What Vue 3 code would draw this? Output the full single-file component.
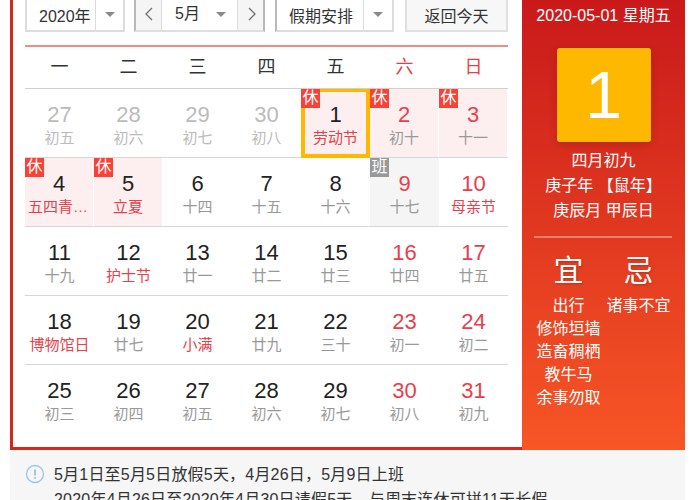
<script setup>
const weekdays = [
  { t: '一' }, { t: '二' }, { t: '三' }, { t: '四' }, { t: '五' },
  { t: '六', red: true }, { t: '日', red: true }
]
const d = (n, l, o = {}) => ({ n, l, ...o })
const days = [
  d(27, '初五', { dim: true }), d(28, '初六', { dim: true }), d(29, '初七', { dim: true }), d(30, '初八', { dim: true }),
  d(1, '劳动节', { rest: true, fest: true, sel: true }), d(2, '初十', { rest: true, wk: true }), d(3, '十一', { rest: true, wk: true }),
  d(4, '五四青年节', { rest: true, fest: true }), d(5, '立夏', { rest: true, fest: true }), d(6, '十四'), d(7, '十五'), d(8, '十六'),
  d(9, '十七', { work: true, wk: true }), d(10, '母亲节', { wk: true, fest: true }),
  d(11, '十九'), d(12, '护士节', { fest: true }), d(13, '廿一'), d(14, '廿二'), d(15, '廿三'), d(16, '廿四', { wk: true }), d(17, '廿五', { wk: true }),
  d(18, '博物馆日', { fest: true }), d(19, '廿七'), d(20, '小满', { fest: true }), d(21, '廿九'), d(22, '三十'), d(23, '初一', { wk: true }), d(24, '初二', { wk: true }),
  d(25, '初三', { last: true }), d(26, '初四', { last: true }), d(27, '初五', { last: true }), d(28, '初六', { last: true }), d(29, '初七', { last: true }), d(30, '初八', { wk: true, last: true }), d(31, '初九', { wk: true, last: true })
]
const yi = ['出行', '修饰垣墙', '造畜稠栖', '教牛马', '余事勿取']
</script>

<template>
  <div class="page">
    <div class="calendar">
      <div class="main">
        <div class="toolbar">
          <div class="box year">
            <span class="label">2020年</span>
            <span class="arrow-cell"><i class="caret"></i></span>
          </div>
          <div class="box month">
            <span class="nav">
              <svg width="10" height="14" viewBox="0 0 10 14"><path d="M8 1 2 7l6 6" fill="none" stroke="#707070" stroke-width="1.300" /></svg>
            </span>
            <span class="month-mid"><span class="label">5月</span><i class="caret"></i></span>
            <span class="nav nav-r">
              <svg width="10" height="14" viewBox="0 0 10 14"><path d="M2 1l6 6-6 6" fill="none" stroke="#707070" stroke-width="1.300" /></svg>
            </span>
          </div>
          <div class="box holiday">
            <span class="label">假期安排</span>
            <span class="arrow-cell"><i class="caret"></i></span>
          </div>
          <div class="today">返回今天</div>
        </div>
        <div class="weekhead">
          <div v-for="w in weekdays" :key="w.t" class="wh" :class="{ red: w.red }">{{ w.t }}</div>
        </div>
        <div class="grid">
          <div v-for="(c, i) in days" :key="i" class="cell"
            :class="{ rest: c.rest, work: c.work, dim: c.dim, wk: c.wk, fest: c.fest, sel: c.sel, last: c.last }">
            <span v-if="c.rest" class="tag">休</span>
            <span v-if="c.work" class="tag tag-work">班</span>
            <div class="num">{{ c.n }}</div>
            <div class="lunar">{{ c.l }}</div>
          </div>
        </div>
      </div>
      <aside class="side">
        <div class="side-date">2020-05-01 星期五</div>
        <div class="big">1</div>
        <div class="side-l">四月初九</div>
        <div class="side-l">庚子年 【鼠年】</div>
        <div class="side-l">庚辰月 甲辰日</div>
        <div class="rule"></div>
        <div class="almanac">
          <div class="col">
            <div class="head">宜</div>
            <div v-for="t in yi" :key="t" class="it">{{ t }}</div>
          </div>
          <div class="col">
            <div class="head">忌</div>
            <div class="it">诸事不宜</div>
          </div>
        </div>
      </aside>
    </div>
    <div class="note">
      <svg class="info" width="20" height="20" viewBox="0 0 20 20">
        <circle cx="10" cy="10" r="8.500" fill="none" stroke="#9cc2f5" stroke-width="1.300" />
        <path d="M10 5.500v6M10 13v1.800" stroke="#7fb0f0" stroke-width="1.400" fill="none" />
      </svg>
      <div class="note-text">
        <div>5月1日至5月5日放假5天，4月26日，5月9日上班</div>
        <div>2020年4月26日至2020年4月30日请假5天，与周末连休可拼11天长假</div>
      </div>
    </div>
  </div>
</template>

<style>
html, body { margin: 0; overflow: hidden; background: #fff; }
</style>

<style scoped>
.page {
  width: 700px;
  height: 500px;
  overflow: hidden;
  font-family: "Liberation Sans", "Noto Sans CJK SC", sans-serif;
  color: #333;
  background: #fff;
}
.calendar {
  margin: -2px 15px 0 10px;
  height: 452px;
  box-sizing: border-box;
  display: flex;
  border-left: 3px solid #d5251c;
  border-bottom: 3px solid #d5251c;
}
.main {
  width: 509px;
  padding: 0 14px 0 12px;
  box-sizing: border-box;
}
.toolbar {
  display: flex;
  height: 34px;
  font-size: 16px;
  line-height: 34px;
}
.box {
  display: flex;
  box-sizing: border-box;
  height: 34px;
  border: 2px solid #dcdcdc;
  background: #fff;
}
.year { width: 100px; }
.year .label { width: 68px; padding-left: 12px; box-sizing: border-box; }
.arrow-cell {
  flex: 1;
  display: flex;
  align-items: center;
  justify-content: center;
  border-left: 1px solid #dcdcdc;
  padding-bottom: 2px;
}
.caret {
  display: block;
  width: 0;
  height: 0;
  border-left: 5px solid transparent;
  border-right: 5px solid transparent;
  border-top: 5px solid #8a8a8a;
}
.month {
  width: 131px;
  margin-left: 9px;
  border-color: #b8b8b8 #b8b8b8 #dedede #b8b8b8;
}
.nav {
  width: 26px;
  display: flex;
  align-items: center;
  justify-content: center;
  background: #f5f5f5;
  border-right: 1px solid #dcdcdc;
  padding-bottom: 2px;
  box-sizing: border-box;
}
.nav-r { border-right: 0; border-left: 1px solid #dcdcdc; padding-left: 2px; }
.month-mid {
  flex: 1;
  display: flex;
  align-items: center;
  justify-content: space-between;
  padding: 0 11px 2px 13px;
}
.holiday {
  width: 119px;
  margin-left: 10px;
  border-color: #b8b8b8 #dcdcdc #dcdcdc #b8b8b8;
}
.holiday .label { width: 86px; padding-left: 12px; box-sizing: border-box; white-space: nowrap; }
.today {
  width: 103px;
  height: 34px;
  box-sizing: border-box;
  margin-left: 11px;
  border: 2px solid #e0e0e0;
  background: #f7f7f7;
  text-align: center;
}
.weekhead {
  display: grid;
  grid-template-columns: repeat(7, 69px);
  margin-top: 13px;
  height: 41px;
  border-top: 2px solid #f28b85;
  border-bottom: 1px solid #d0d0d0;
  font-size: 18px;
  line-height: 41px;
  text-align: center;
}
.wh.red { color: #e83e3e; }
.grid {
  display: grid;
  grid-template-columns: repeat(7, 69px);
  grid-auto-rows: 69px;
}
.cell {
  position: relative;
  box-sizing: border-box;
  border-bottom: 1px solid #d6d6d6;
  text-align: center;
  padding-top: 12px;
}
.cell.last { border-bottom: 0; }
.cell.rest { background: #fdefef; border-right: 1px solid #fff; }
.cell.work { background: #f5f5f5; }
.num { font-size: 22px; line-height: 27px; color: #222; }
.lunar { font-size: 15px; line-height: 20px; color: #999; white-space: nowrap; overflow: hidden; text-overflow: ellipsis; padding: 0 3px; }
.dim .num { color: #bbb; }
.dim .lunar { color: #bbb; }
.wk .num { color: #e8404a; }
.fest .lunar { color: #e8404a; }
.cell.sel {
  border: 4px solid #ffb800;
  border-top-width: 3px;
  padding-top: 9px;
}
.sel .lunar { padding: 0; }
.sel .tag { left: -4px; top: -3px; }
.tag {
  position: absolute;
  left: 0;
  top: 0;
  width: 19px;
  height: 19px;
  background: #fa4136;
  color: #fff;
  font-size: 16px;
  line-height: 18px;
  text-align: center;
}
.tag-work { background: #999; }
.side {
  flex: 1;
  margin-bottom: -3px;
  background: linear-gradient(#c9191a, #f75626);
  color: #fff;
  text-align: center;
  font-size: 16px;
}
.side-date { line-height: 20px; margin-top: 8px; }
.big {
  width: 94px;
  height: 94px;
  margin: 22px auto 6px;
  border-radius: 3px;
  background: #ffb800;
  box-shadow: 0 3px 8px rgba(0, 0, 0, .15);
  font-size: 66px;
  line-height: 94px;
}
.side-l { line-height: 25px; }
.rule {
  height: 2px;
  margin: 13px 13px 0 12px;
  background: rgba(255, 255, 255, .35);
}
.almanac {
  display: flex;
  padding: 0 14px;
  margin-top: 14px;
}
.col { width: 65px; }
.col + .col { margin-left: 5px; }
.head { font-size: 30px; line-height: 38px; margin-bottom: 4px; text-shadow: 1px 1px 2px rgba(0,0,0,.2); }
.it { line-height: 23px; white-space: nowrap; }
.note {
  display: flex;
  margin: 0 15px 0 10px;
  height: 50px;
  background: #f6f6f6;
  padding: 12px 0 0 15px;
  box-sizing: border-box;
  font-size: 16px;
  line-height: 25px;
  letter-spacing: .2px;
}
.info { margin: 2px 9px 0 0; flex: none; }
.note-text { white-space: nowrap; }
</style>
